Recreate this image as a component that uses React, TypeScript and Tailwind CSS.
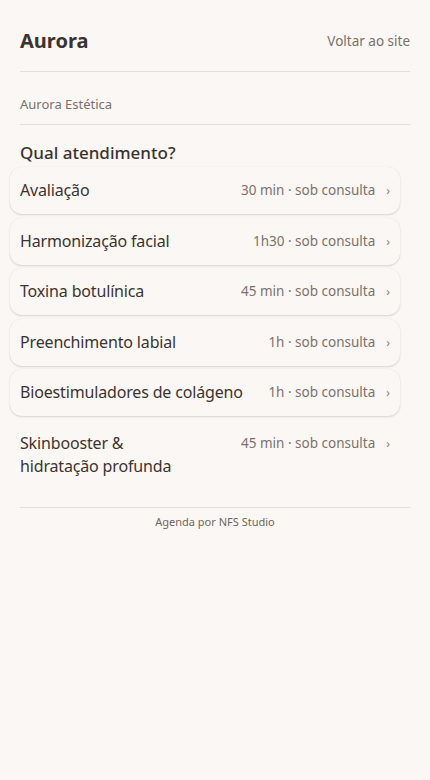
type Service = { name: string; meta: string; card: boolean; narrow?: boolean }

const services: Service[] = [
    { name: "Avaliação", meta: "30 min · sob consulta", card: true },
    { name: "Harmonização facial", meta: "1h30 · sob consulta", card: true },
    { name: "Toxina botulínica", meta: "45 min · sob consulta", card: true },
    { name: "Preenchimento labial", meta: "1h · sob consulta", card: true },
    { name: "Bioestimuladores de colágeno", meta: "1h · sob consulta", card: true },
    { name: "Skinbooster & hidratação profunda", meta: "45 min · sob consulta", card: false, narrow: true },
]

function ServiceRow({ service }: { service: Service }) {
    return <button className={"-mx-[10px] flex w-[390px] items-start gap-6 rounded-xl px-[10px] py-3 text-left " + (service.card ? "shadow-[0_1px_2px_rgba(60,40,30,0.16),0_0_1px_rgba(60,40,30,0.10)]" : "")}>
        <span className="min-w-0 flex-1 text-[16px] leading-[23px] tracking-[-0.01em] text-[#3b3431]">
            <span className={"block " + (service.narrow ? "max-w-[170px]" : "")}>{service.name}</span>
        </span>
        <span className="flex shrink-0 items-center gap-[11px] text-[13.5px] leading-[23px] text-[#7b726d] whitespace-nowrap">
            {service.meta}
            <span className="text-[12px] text-[#8a807a]">›</span>
        </span>
    </button>
}

export default function App() {
    return <div className="min-h-[780px] bg-[#fbf7f4] px-5 pt-[27px]" style={{ fontFamily: '"Noto Sans", Lato, sans-serif' }}>
        <header className="flex items-center justify-between pb-[16px] border-b border-[#e4dedb]">
            <h1 className="text-[20px] font-bold leading-[28px] text-[#3a3330]">Aurora</h1>
            <a className="text-[13.5px] text-[#7a716c]">Voltar ao site</a>
        </header>
        <div className="pt-[24px] pb-[12px] text-[13px] leading-[16px] text-[#7a716c] border-b border-[#e4dedb]">Aurora Estética</div>
        <h2 className="mt-[16px] mb-[2px] text-[17px] font-medium leading-[24px] text-[#3a3330]">Qual atendimento?</h2>
        <ul className="flex flex-col gap-[3.6px]">
            {services.map((s) => <li key={s.name}><ServiceRow service={s} /></li>)}
        </ul>
        <footer className="mt-[17px] border-t border-[#e4dedb] pt-[6px] text-center text-[11px] text-[#6f6661]">Agenda por NFS Studio</footer>
    </div>
}
